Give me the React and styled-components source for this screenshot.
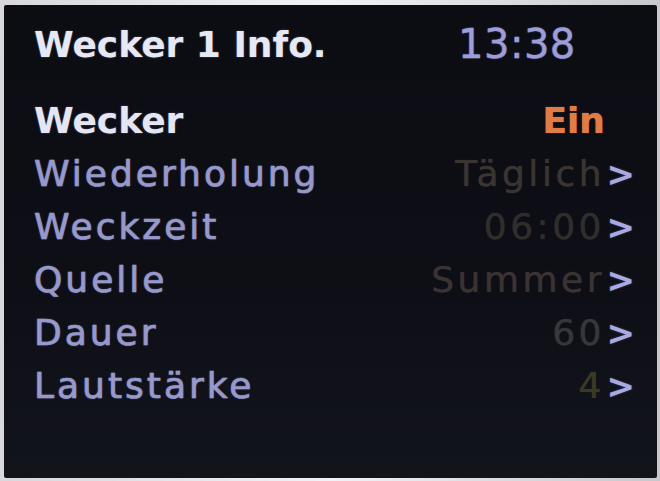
import React from "react";
import styled, { createGlobalStyle } from "styled-components";

const GlobalStyle = createGlobalStyle`
    html, body {
        margin: 0;
        padding: 0;
        background: #e9e9ec;
    }
    body {
        width: 660px;
        height: 481px;
        overflow: hidden;
        font-family: "DejaVu Sans", "Liberation Sans", sans-serif;
    }
`;

const Frame = styled.div`
    box-sizing: border-box;
    width: 660px;
    height: 481px;
    padding: 5px 3px 3px 4px;
    background: linear-gradient(90deg, #d8d8dc 0%, #f2f2f4 50%, #c8c8cc 100%);
`;

const Screen = styled.div`
    box-sizing: border-box;
    height: 100%;
    padding: 17px 22px 0 30px;
    background: linear-gradient(180deg, #0c0d13 0%, #0e0f16 60%, #12141c 100%);
    border-radius: 2px;
    display: flex;
    flex-direction: column;
`;

const Header = styled.div`
    display: flex;
    align-items: center;
    height: 44px;
    margin-bottom: 28px;
`;

const Title = styled.div`
    font-size: 36px;
    font-weight: bold;
    color: #e6e8f4;
    width: 424px;
    text-shadow: 0 0 2px rgba(220, 224, 255, 0.35);
`;

const Clock = styled.div`
    font-size: 40px;
    color: #9d9ed8;
    letter-spacing: 0.5px;
    -webkit-text-stroke: 0.4px #9d9ed8;
    text-shadow: 0 0 2px rgba(160, 160, 230, 0.4);
`;

const List = styled.div`
    display: grid;
    grid-template-columns: 1fr auto 30px;
    grid-auto-rows: 53px;
    align-items: center;
`;

const Label = styled.div`
    font-size: 36px;
    font-weight: ${p => (p.$active ? "bold" : "normal")};
    letter-spacing: ${p => (p.$active ? "0" : "3px")};
    color: ${p => (p.$active ? "#e4e6f4" : "#9799cc")};
    -webkit-text-stroke: ${p => (p.$active ? "0" : "0.7px #9799cc")};
    text-shadow: ${p =>
        p.$active
            ? "0 0 2px rgba(220, 224, 255, 0.35)"
            : "0 0 2px rgba(151, 153, 204, 0.5)"};
`;

const Value = styled.div`
    font-size: 36px;
    text-align: right;
    font-weight: ${p => (p.$active ? "bold" : "normal")};
    letter-spacing: ${p => (p.$active ? "0" : "3.5px")};
    color: ${p => p.$color};
    text-shadow: 0 0 1px ${p => p.$color};
`;

const Arrow = styled.div`
    font-size: 34px;
    font-weight: bold;
    color: #a9aae2;
    text-align: right;
    text-shadow: 0 0 2px rgba(170, 170, 240, 0.4);
`;

const rows = [
    { label: "Wecker", value: "Ein", color: "#e27c46", active: true },
    { label: "Wiederholung", value: "Täglich", color: "#3b3532" },
    { label: "Weckzeit", value: "06:00", color: "#302e2c" },
    { label: "Quelle", value: "Summer", color: "#3a3331" },
    { label: "Dauer", value: "60", color: "#37373b" },
    { label: "Lautstärke", value: "4", color: "#3b3a22" },
];

export default function App() {
    return (
        <>
            <GlobalStyle />
            <Frame>
                <Screen>
                    <Header>
                        <Title>Wecker 1 Info.</Title>
                        <Clock>13:38</Clock>
                    </Header>
                    <List>
                        {rows.map(row => (
                            <React.Fragment key={row.label}>
                                <Label $active={row.active}>{row.label}</Label>
                                <Value $active={row.active} $color={row.color}>{row.value}</Value>
                                <Arrow>{row.active ? "" : ">"}</Arrow>
                            </React.Fragment>
                        ))}
                    </List>
                </Screen>
            </Frame>
        </>
    );
}
